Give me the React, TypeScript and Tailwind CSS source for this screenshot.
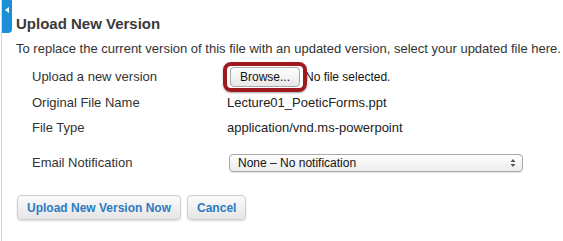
import React from 'react';

const rows = [
  { label: 'Original File Name', value: 'Lecture01_PoeticForms.ppt' },
  { label: 'File Type', value: 'application/vnd.ms-powerpoint' },
];

export default function App() {
  return (
    <div className="relative w-[563px] h-[241px] bg-white overflow-hidden font-['Liberation_Sans',Arial,sans-serif] text-[#333]">
      {/* left rail */}
      <div className="absolute left-[1px] top-0 h-full w-px bg-[#d6d6d6]" />
      <div className="absolute left-[2px] top-0 w-[10px] h-[33px] bg-[#1b8fd8] rounded-br-[4px] flex items-start justify-center pt-[7px]">
        <span className="block w-0 h-0 border-y-[3px] border-y-transparent border-r-[4px] border-r-white" />
      </div>

      <div className="pl-4 pt-[15px]">
        <h2 className="text-[15px] font-bold leading-[18px] text-[#3a3a3a]">Upload New Version</h2>
        <p className="mt-[8px] text-[13px] leading-[16px]">
          To replace the current version of this file with an updated version, select your updated file here.
        </p>

        <div className="pl-4 mt-[7px] text-[13px]">
          {/* file input */}
          <div className="flex items-center h-[26px]">
            <span className="w-[191px]">Upload a new version</span>
            <div className="flex items-center">
              <span className="relative flex items-center justify-center rounded-[8px] border-[4px] border-[#a01a1d] px-[3px] py-[1px] shadow-[0_1px_2px_rgba(0,0,0,0.35)]">
                <span className="block h-[20px] px-[9px] rounded-[4px] border border-[#a8a8a8] bg-gradient-to-b from-white to-[#e8e8e8] text-[12px] leading-[18px] text-[#111]">
                  Browse...
                </span>
              </span>
              <span className="ml-[-2px] text-[12px] text-[#111]">No file selected.</span>
            </div>
          </div>

          {rows.map((r) => (
            <div key={r.label} className="flex items-center h-[25px] first:mt-[4px]">
              <span className="w-[195px]">{r.label}</span>
              <span className="text-[#222]">{r.value}</span>
            </div>
          ))}

          {/* email select */}
          <div className="flex items-center h-[24px] mt-[11px]">
            <span className="w-[197px]">Email Notification</span>
            <div className="flex items-center justify-between w-[294px] h-[18px] rounded-[4px] border border-[#a9a9a9] bg-gradient-to-b from-white to-[#ececec] pl-[8px] pr-[6px] shadow-[0_1px_1px_rgba(0,0,0,0.12)]">
              <span className="text-[12px] leading-[16px] text-[#111]">None – No notification</span>
              <svg width="6" height="10" viewBox="0 0 6 10" className="text-[#555]">
                <path d="M0.5 4 L3 1 L5.5 4 Z M0.5 6 L3 9 L5.5 6 Z" fill="currentColor" />
              </svg>
            </div>
          </div>
        </div>

        {/* actions */}
        <div className="flex gap-[6px] mt-[20px] pl-[1px]">
          <button className="h-[25px] px-[9px] rounded-[4px] border border-[#cfcfcf] bg-gradient-to-b from-[#fafafa] to-[#e6e6e6] text-[12px] font-bold text-[#2d7bc2] shadow-[0_1px_2px_rgba(0,0,0,0.15)]">
            Upload New Version Now
          </button>
          <button className="h-[25px] px-[9px] rounded-[4px] border border-[#cfcfcf] bg-gradient-to-b from-[#fafafa] to-[#e6e6e6] text-[12px] font-bold text-[#2d7bc2] shadow-[0_1px_2px_rgba(0,0,0,0.15)]">
            Cancel
          </button>
        </div>
      </div>
    </div>
  );
}
